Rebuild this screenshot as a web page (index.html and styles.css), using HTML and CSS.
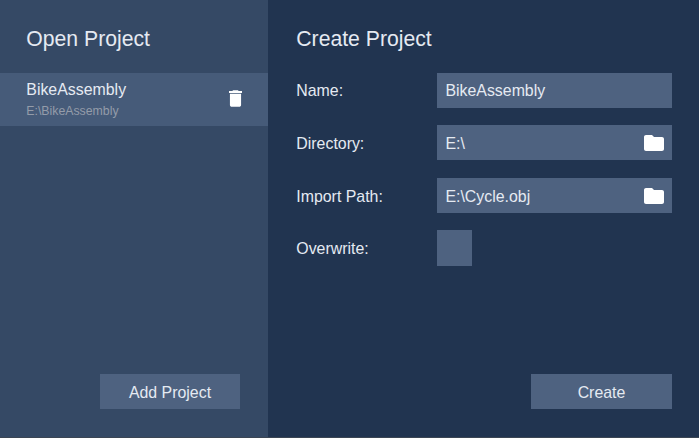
FILE: index.html
```html
<!DOCTYPE html>
<html lang="en">
<head>
<meta charset="utf-8">
<title>Projects</title>
<link rel="stylesheet" href="styles.css">
</head>
<body>
<div class="app">
  <section class="open">
    <h1>Open Project</h1>
    <div class="project">
      <div class="info"><div class="name">BikeAssembly</div><div class="path">E:\BikeAssembly</div></div>
      <svg class="trash" viewBox="5 3 14 18"><path d="M6 19c0 1.1.9 2 2 2h8c1.1 0 2-.9 2-2V7H6v12zM19 4h-3.5l-1-1h-5l-1 1H5v2h14V4z"/></svg>
    </div>
    <button class="button">Add Project</button>
  </section>
  <section class="create">
    <h1>Create Project</h1>
    <div class="form">
      <span class="label first">Name:</span><div class="field first">BikeAssembly</div>
      <span class="label">Directory:</span><div class="field">E:\<svg class="folder" viewBox="2 4 20 16"><path d="M10 4H4c-1.1 0-2 .9-2 2v12c0 1.1.9 2 2 2h16c1.1 0 2-.9 2-2V8c0-1.1-.9-2-2-2h-8l-2-2z"/></svg></div>
      <span class="label">Import Path:</span><div class="field">E:\Cycle.obj<svg class="folder" viewBox="2 4 20 16"><path d="M10 4H4c-1.1 0-2 .9-2 2v12c0 1.1.9 2 2 2h16c1.1 0 2-.9 2-2V8c0-1.1-.9-2-2-2h-8l-2-2z"/></svg></div>
      <span class="label">Overwrite:</span><div class="check"></div>
    </div>
    <button class="button">Create</button>
  </section>
</div>
</body>
</html>
```
FILE: styles.css
```css
* { box-sizing: border-box; }
body { margin: 0; font-family: "Liberation Sans", Arial, sans-serif; font-size: 15.9px; color: #e5eaf2; }
.app { display: flex; width: 699px; height: 438px; border-bottom: 1px solid #3c4654; }
.open, .create { display: flex; flex-direction: column; }
.open { width: 268px; background: #354965; }
.create { flex: 1; padding: 0 27px 0 28px; background: #213450; }
h1 { margin: 0; height: 73px; padding-top: 27px; font-size: 21.2px; line-height: 24px; font-weight: 400; }
.open h1 { padding-left: 26.3px; }
.create h1 { padding-left: .3px; }
.project { display: flex; justify-content: space-between; height: 53px; padding: 7px 26px 0 26.3px; background: #465b79; }
.name { line-height: 20px; }
.path { margin-top: 3px; font-size: 12.3px; line-height: 16px; color: #949ca9; }
.trash { width: 13px; height: 17px; margin-top: 10px; fill: #fff; }
.button { width: 141px; height: 35px; margin: auto 0 28px; padding: 2px 0 0; align-self: flex-end; border: 0; background: #4e6280; color: inherit; font: inherit; }
.open .button { width: 140px; margin-right: 28px; }
.form { display: grid; grid-template-columns: 141px 235px; grid-template-rows: 52px 53px 52px 36px; align-items: start; }
.label { padding-left: .3px; line-height: 38px; }
.field { display: flex; justify-content: space-between; height: 35px; padding: 0 8px 0 8.4px; line-height: 38px; background: #4e6280; }
.first { line-height: 36px; }
.folder { width: 20px; height: 16px; margin-top: 9.5px; fill: #fff; }
.check { width: 35px; height: 36px; background: #4e6280; }
```
